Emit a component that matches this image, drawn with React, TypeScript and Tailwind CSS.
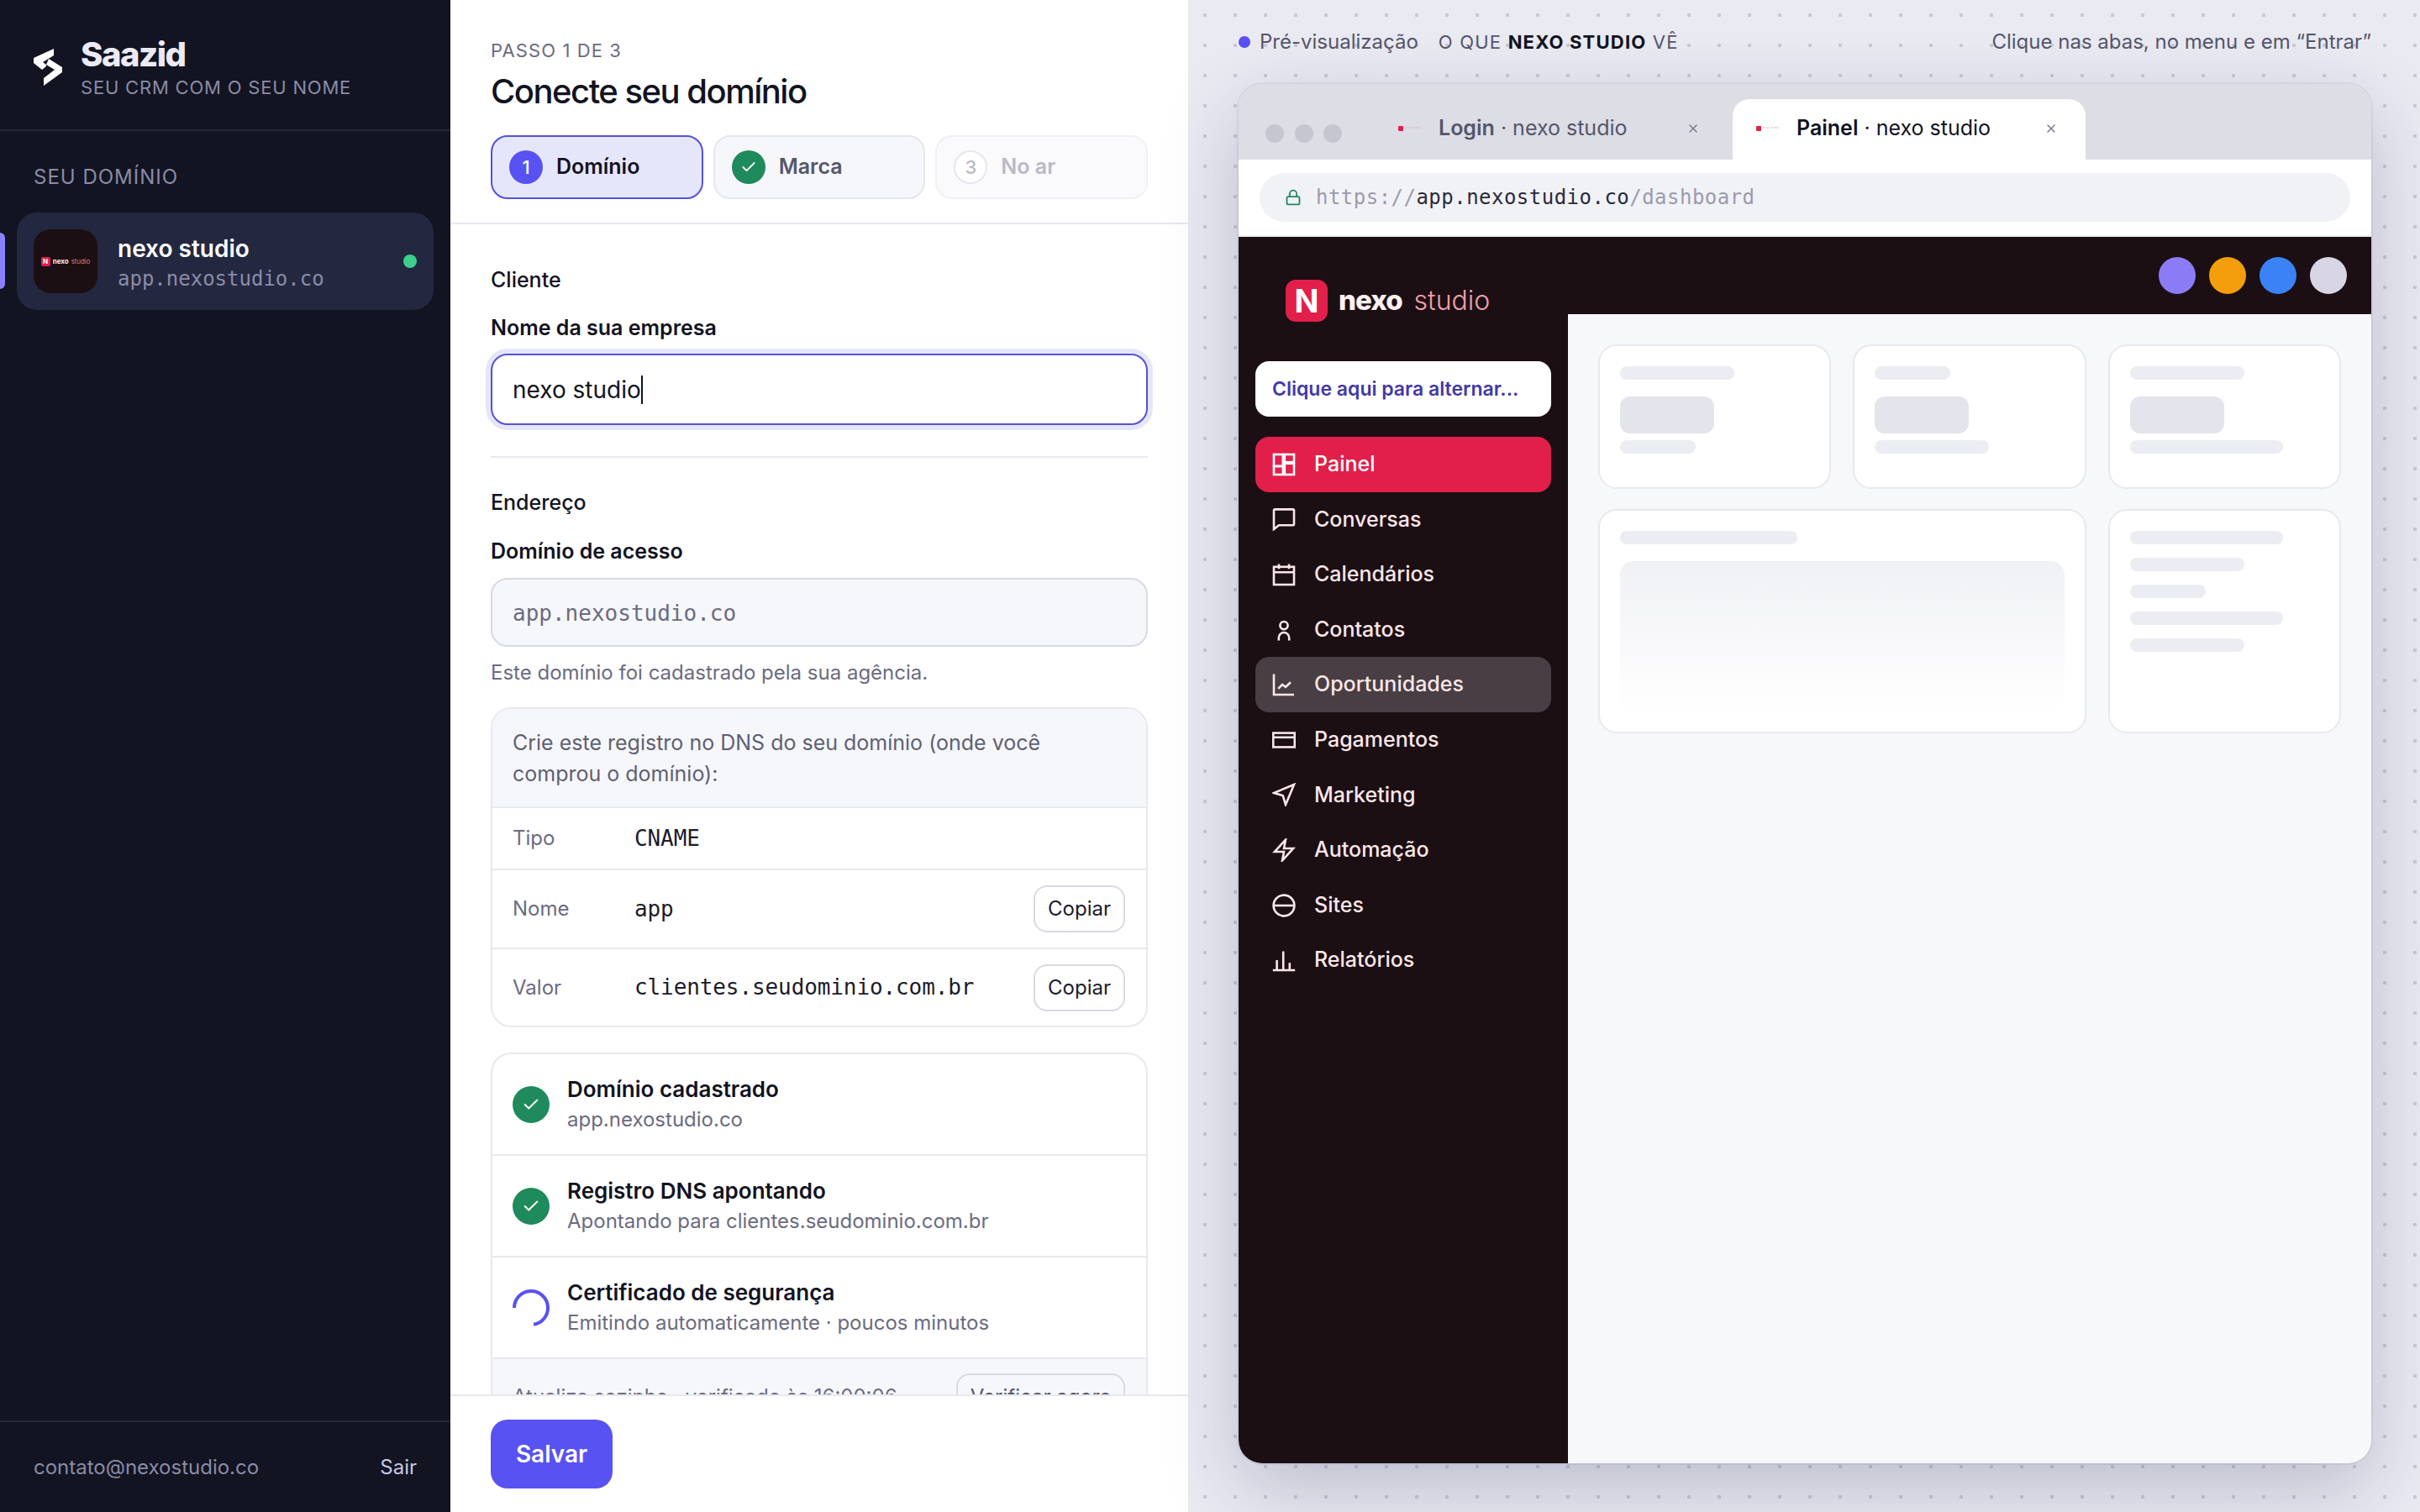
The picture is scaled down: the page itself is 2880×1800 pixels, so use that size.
import { Check, Lock, X } from "lucide-react";
import type { ReactNode } from "react";

const stroke = {
  fill: "none",
  stroke: "currentColor",
  strokeWidth: 1.3,
};

function NavIcon({ children }: { children: ReactNode }) {
  return (
    <svg width="28" height="28" viewBox="0 0 14 14" {...stroke} className="shrink-0">
      {children}
    </svg>
  );
}

const navItems: { label: string; icon: ReactNode; state?: "active" | "hover" }[] = [
  {
    label: "Painel",
    state: "active",
    icon: (
      <>
        <rect x="1" y="1" width="5.4" height="7" />
        <rect x="1" y="8" width="5.4" height="5" />
        <rect x="7.4" y="1" width="5.6" height="4.6" />
        <rect x="7.4" y="6.4" width="5.6" height="6.6" />
      </>
    ),
  },
  {
    label: "Conversas",
    icon: <path d="M1.6 1.2H12.4a.6.6 0 0 1 .6.6V10a.6.6 0 0 1-.6.6H4L1 13V1.8a.6.6 0 0 1 .6-.6Z" />,
  },
  {
    label: "Calendários",
    icon: (
      <>
        <rect x="1" y="2.4" width="12" height="10.6" />
        <path d="M1 5.6H13M4 .8V3.6M10 .8V3.6" />
      </>
    ),
  },
  {
    label: "Contatos",
    icon: (
      <>
        <circle cx="7" cy="4.3" r="2.3" />
        <path d="M3.9 13.2V11.6a3.1 3.1 0 0 1 6.2 0V13.2" />
      </>
    ),
  },
  {
    label: "Oportunidades",
    state: "hover",
    icon: <path d="M1 .8V13H13M3.6 9.4 6 7l2 1.4L11 5.6" />,
  },
  {
    label: "Pagamentos",
    icon: (
      <>
        <rect x=".6" y="2.8" width="12.8" height="8.4" />
        <path d="M.6 5.4H13.4" />
      </>
    ),
  },
  {
    label: "Marketing",
    icon: <path d="M13 1 1 6l5.4 1.6L8 13Z" />,
  },
  {
    label: "Automação",
    icon: <path d="M8 .8 1.4 8H7l-1 5.2L12.6 6H7Z" />,
  },
  {
    label: "Sites",
    icon: (
      <>
        <circle cx="7" cy="7" r="6.2" />
        <path d="M.8 7H13.2" />
      </>
    ),
  },
  {
    label: "Relatórios",
    icon: <path d="M.4 13H13.6M2.8 13V7M6.6 13V1.8M10.4 13V8.6" />,
  },
];

function SaazidMark() {
  return (
    <svg width="34" height="44" viewBox="10 8 34 44" className="shrink-0">
      <polygon fill="#ffffff" points="34,8 34,16 21,24 25,27 25,29 20,33 10,25 10,19" />
      <polygon fill="#ffffff" points="28,20 44,30 44,36 22,52 22,43 35,33 25,27" />
    </svg>
  );
}

function CheckBadge({ size }: { size: "sm" | "lg" }) {
  return (
    <span
      className={
        size === "sm"
          ? "flex h-10 w-10 shrink-0 items-center justify-center rounded-full bg-[#1f8a5b] text-white"
          : "flex h-11 w-11 shrink-0 items-center justify-center rounded-full bg-[#1f8a5b] text-white"
      }
    >
      <Check size={size === "sm" ? 20 : 22} strokeWidth={2.2} />
    </span>
  );
}

function StepTab({
  n,
  label,
  state,
}: {
  n: string;
  label: string;
  state: "current" | "done" | "todo";
}) {
  const box =
    state === "current"
      ? "border-[#5552d9] bg-[#e6e6fb] text-[#12131f]"
      : state === "done"
        ? "border-[#e6e7ee] bg-[#f6f7fb] text-[#55566a]"
        : "border-[#f0f0f5] bg-[#fafafc] text-[#b9b9c6]";
  return (
    <div className={`flex h-[76px] flex-1 items-center gap-4 rounded-[20px] border-2 pl-5 text-[25px] font-semibold ${box}`}>
      {state === "done" && <CheckBadge size="sm" />}
      {state === "current" && (
        <span className="flex h-10 w-10 shrink-0 items-center justify-center rounded-full bg-[#5852f2] text-[22px] font-medium text-white">
          {n}
        </span>
      )}
      {state === "todo" && (
        <span className="flex h-10 w-10 shrink-0 items-center justify-center rounded-full border-2 border-[#e6e7ee] bg-white text-[22px] font-medium text-[#b9b9c6]">
          {n}
        </span>
      )}
      {label}
    </div>
  );
}

function DnsRow({ label, value, copy, height }: { label: string; value: string; copy?: boolean; height: string }) {
  return (
    <div className={`flex items-center border-t-2 border-[#e8e8ef] px-6 ${height}`}>
      <span className="w-[145px] shrink-0 text-[24px] text-[#6b6b80]">{label}</span>
      <span className="flex-1 font-['DejaVu_Sans_Mono',monospace] text-[26px] tracking-[-0.1px] text-[#1b1c2b]">{value}</span>
      {copy && (
        <button className="mr-[1px] h-14 w-[109px] rounded-2xl border-2 border-[#d9d9e3] bg-white text-[24px] text-[#1b1c2b]">
          Copiar
        </button>
      )}
    </div>
  );
}

function StatusRow({ icon, title, sub }: { icon: ReactNode; title: string; sub: string }) {
  return (
    <div className="flex h-[121px] items-center gap-[21px] border-b-2 border-[#e8e8ef] pl-6">
      {icon}
      <div>
        <div className="text-[26px] leading-9 font-semibold text-[#12131f]">{title}</div>
        <div className="text-[24px] leading-9 text-[#6b6b80]">{sub}</div>
      </div>
    </div>
  );
}

function MiniLogo() {
  return (
    <div className="flex items-center">
      <span className="flex h-[11px] w-[11px] items-center justify-center rounded-[2px] bg-[#e21f4a] text-[8px] leading-none font-bold text-white">
        N
      </span>
      <span className="ml-[3px] text-[8px] leading-none font-bold text-[#fdecee]">nexo</span>
      <span className="ml-[3px] text-[8px] leading-none font-light text-[#f0a0aa]">studio</span>
    </div>
  );
}

function Favicon() {
  return (
    <div className="flex w-7 shrink-0 items-center">
      <span className="h-[6px] w-[6px] shrink-0 rounded-[1px] bg-[#e21f4a]" />
      <span className="ml-[2px] text-[3.5px] leading-none whitespace-nowrap text-[#e8b4be]">nexo studio</span>
    </div>
  );
}

function BrowserTab({ active, title }: { active?: boolean; title: string }) {
  return (
    <div
      className={
        active
          ? "flex h-[72px] w-[420px] items-center rounded-t-[20px] bg-white pr-[33px] pb-[2px] pl-7 text-[25px] text-[#12131f]"
          : "flex h-[72px] w-[420px] items-center rounded-t-[20px] pr-[33px] pb-[2px] pl-7 text-[25px] text-[#55566a]"
      }
    >
      <Favicon />
      <span className="ml-[20px] flex-1">
        <span className="font-semibold">{title}</span> · nexo studio
      </span>
      <X size={16} strokeWidth={2} className="text-[#77788a]" />
    </div>
  );
}

function Bar({ w }: { w: string }) {
  return <div className={`${w} h-4 rounded-lg bg-[#ecedf2]`} />;
}

function StatCard({ top, bottom }: { top: string; bottom: string }) {
  return (
    <div className="h-[172px] rounded-[22px] border-2 border-[#e8e8ef] bg-white p-6">
      <Bar w={top} />
      <div className="mt-5 h-11 w-[112px] rounded-xl bg-[#e4e4ec]" />
      <div className="mt-2">
        <Bar w={bottom} />
      </div>
    </div>
  );
}

export default function App() {
  return (
    <div className="flex h-[1800px] w-[2880px] overflow-hidden font-['Inter',sans-serif]">
      {/* sidebar */}
      <aside className="flex h-full w-[536px] shrink-0 flex-col bg-[#121421]">
        <div className="flex h-[156px] items-center gap-[22px] border-b-2 border-[#252638] pt-[6px] pl-10">
          <SaazidMark />
          <div>
            <div className="text-[40px] leading-[46px] font-extrabold tracking-[-1.5px] text-[#eceaf6]">Saazid</div>
            <div className="mt-[2px] text-[22px] leading-7 tracking-[0.8px] text-[#8b8ba7]">SEU CRM COM O SEU NOME</div>
          </div>
        </div>
        <div className="relative flex-1">
          <div className="pt-[39px] pl-10 text-[24px] leading-8 tracking-[1px] text-[#8b8ba7]">SEU DOMÍNIO</div>
          <div className="mx-5 mt-[26px] flex h-[116px] items-center gap-6 rounded-3xl bg-[#232840] px-5">
            <div className="flex h-[76px] w-[76px] shrink-0 items-center justify-center rounded-[20px] bg-[#1b0f14]">
              <MiniLogo />
            </div>
            <div className="flex-1 pt-[2px]">
              <div className="text-[28px] leading-10 font-semibold text-white">nexo studio</div>
              <div className="font-['DejaVu_Sans_Mono',monospace] text-[24px] leading-8 text-[#8b8ba7]">
                app.nexostudio.co
              </div>
            </div>
            <span className="h-4 w-4 rounded-full bg-[#3ecf8e]" />
          </div>
          <span className="absolute top-[121px] left-0 h-[67px] w-[6px] rounded-r-md bg-[#8b80ff]" />
        </div>
        <div className="flex h-[109px] items-center justify-between border-t-2 border-[#252638] px-10 text-[24px]">
          <span className="text-[#8b8ba7]">contato@nexostudio.co</span>
          <span className="text-[#c8c8e6]">Sair</span>
        </div>
      </aside>

      {/* form */}
      <main className="flex h-full w-[880px] shrink-0 flex-col border-r-2 border-[#e8e8ef] bg-white">
        <header className="h-[267px] shrink-0 border-b-2 border-[#e8e8ef] px-12 pt-[44px]">
          <div className="text-[22px] leading-8 tracking-[1.1px] text-[#6b6b80]">PASSO 1 DE 3</div>
          <h1 className="mt-[7px] text-[40px] leading-[52px] font-medium tracking-[-1.5px] text-[#12131f]">
            Conecte seu domínio
          </h1>
          <div className="mt-[26px] flex gap-3">
            <StepTab n="1" label="Domínio" state="current" />
            <StepTab n="2" label="Marca" state="done" />
            <StepTab n="3" label="No ar" state="todo" />
          </div>
        </header>

        <div className="min-h-0 flex-1 overflow-hidden px-12 pt-[50px]">
          <div className="text-[25px] leading-8 font-medium text-[#12131f]">Cliente</div>
          <div className="mt-[25px] text-[25px] leading-8 font-semibold text-[#12131f]">Nome da sua empresa</div>
          <div className="mt-[15px] flex h-[85px] items-center rounded-[20px] border-2 border-[#5552d9] bg-white pl-6 text-[28px] text-[#12131f] shadow-[0_0_0_6px_#e6e6fb]">
            nexo studio
            <span className="h-[34px] w-[2px] bg-[#12131f]" />
          </div>
          <div className="mt-[37px] h-[2px] bg-[#e8e8ef]" />

          <div className="mt-[37px] text-[25px] leading-8 font-medium text-[#12131f]">Endereço</div>
          <div className="mt-[26px] text-[25px] leading-8 font-semibold text-[#12131f]">Domínio de acesso</div>
          <div className="mt-4 flex h-[82px] items-center rounded-[20px] border-2 border-[#d9d9e3] bg-[#f6f7fb] pt-[2px] pl-6 font-['DejaVu_Sans_Mono',monospace] text-[26px] text-[#6b6b80]">
            app.nexostudio.co
          </div>
          <div className="mt-[15px] text-[24px] leading-8 text-[#6b6b80]">Este domínio foi cadastrado pela sua agência.</div>

          <div className="mt-[25px] overflow-hidden rounded-3xl border-2 border-[#e8e8ef]">
            <div className="h-[116px] bg-[#f6f7fb] px-6 pt-[22px] text-[25px] leading-[37px] text-[#5f5f73]">
              Crie este registro no DNS do seu domínio (onde você comprou o domínio):
            </div>
            <DnsRow label="Tipo" value="CNAME" height="h-[74px]" />
            <DnsRow label="Nome" value="app" copy height="h-[94px]" />
            <DnsRow label="Valor" value="clientes.seudominio.com.br" copy height="h-[93px]" />
          </div>

          <div className="mt-[30px] overflow-hidden rounded-3xl border-2 border-[#e8e8ef]">
            <StatusRow icon={<CheckBadge size="lg" />} title="Domínio cadastrado" sub="app.nexostudio.co" />
            <StatusRow
              icon={<CheckBadge size="lg" />}
              title="Registro DNS apontando"
              sub="Apontando para clientes.seudominio.com.br"
            />
            <StatusRow
              icon={
                <svg width="44" height="44" viewBox="0 0 44 44" fill="none" stroke="#5852f2" strokeWidth="4" className="shrink-0">
                  <path d="M2 22A20 20 0 1 1 25 41.8" />
                </svg>
              }
              title="Certificado de segurança"
              sub="Emitindo automaticamente · poucos minutos"
            />
            <div className="flex h-[90px] items-center justify-between bg-[#f6f7fb] px-6 text-[24px] text-[#6b6b80]">
              <span>Atualiza sozinho · verificado às 16:00:06</span>
              <button className="mr-[1px] h-14 w-[201px] rounded-2xl border-2 border-[#d9d9e3] text-[24px] text-[#55566a]">
                Verificar agora
              </button>
            </div>
          </div>
        </div>

        <footer className="h-[140px] shrink-0 border-t-2 border-[#e8e8ef] bg-white px-12 pt-[28px]">
          <button className="h-[82px] w-[145px] rounded-[20px] bg-[#5852f2] text-[28px] font-semibold text-white">
            Salvar
          </button>
        </footer>
      </main>

      {/* preview */}
      <section className="flex h-full flex-1 flex-col bg-[#e9eaf2] bg-[radial-gradient(circle,#c8c9d6_2px,transparent_2.5px)] bg-[length:36px_36px] px-[58px]">
        <div className="flex h-[100px] shrink-0 items-center text-[#55566a]">
          <span className="h-[14px] w-[14px] rounded-full bg-[#5852f2]" />
          <span className="ml-[11px] text-[24px]">Pré-visualização</span>
          <span className="ml-6 text-[22px] tracking-[1.2px]">
            O QUE <b className="font-bold text-[#12131f]">NEXO STUDIO</b> VÊ
          </span>
          <span className="ml-auto text-[24px]">Clique nas abas, no menu e em “Entrar”</span>
        </div>

        <div className="flex h-[1642px] w-[1348px] flex-col overflow-hidden rounded-[28px] shadow-[0_0_0_2px_rgba(30,30,60,0.06),0_30px_90px_rgba(30,30,70,0.22)]">
          <div className="flex h-[90px] shrink-0 items-end bg-[#dcdde5] pl-8">
            <div className="mb-5 flex gap-[12.5px]">
              <span className="h-[22px] w-[22px] rounded-full bg-[#c5c6d0]" />
              <span className="h-[22px] w-[22px] rounded-full bg-[#c5c6d0]" />
              <span className="h-[22px] w-[22px] rounded-full bg-[#c5c6d0]" />
            </div>
            <div className="ml-[39px] flex gap-[6px]">
              <BrowserTab title="Login" />
              <BrowserTab title="Painel" active />
            </div>
          </div>

          <div className="flex h-[92px] shrink-0 items-start border-b-2 border-[#eeeef3] bg-white px-[25px] pt-4">
            <div className="flex h-[58px] w-full items-center rounded-full bg-[#f1f2f6] pl-[30px] font-['DejaVu_Sans_Mono',monospace] text-[24px] tracking-[0.48px] text-[#9a9aae]">
              <Lock size={20} strokeWidth={2.2} className="shrink-0 text-[#1f8a5b]" />
              <span className="ml-[17px]">
                https://<span className="text-[#2a2a3a]">app.nexostudio.co</span>/dashboard
              </span>
            </div>
          </div>

          <div className="flex min-h-0 flex-1">
            <div className="flex w-[392px] shrink-0 flex-col bg-[#1b0f14] px-5 pt-[51px]">
              <div className="flex h-[50px] items-center pl-9">
                <span className="flex h-[50px] w-[50px] items-center justify-center rounded-xl bg-[#e21f4a] text-[38px] font-bold text-white">
                  N
                </span>
                <span className="ml-[13px] text-[33px] font-extrabold tracking-[-1px] text-[#fdf0f1]">nexo</span>
                <span className="ml-[14px] text-[32px] font-light text-[#f0a0aa]">studio</span>
              </div>
              <div className="mt-[47px] flex h-[66px] items-center rounded-2xl bg-white pl-5 text-[23px] font-semibold text-[#4338a8]">
                Clique aqui para alternar...
              </div>
              <nav className="mt-6 flex flex-col">
                {navItems.map((item) => (
                  <div
                    key={item.label}
                    className={
                      item.state === "active"
                        ? "flex h-[65.6px] items-center rounded-2xl bg-[#e21f4a] pl-5 text-[25px] font-medium text-white"
                        : item.state === "hover"
                          ? "flex h-[65.6px] items-center rounded-2xl bg-[#483e43] pl-5 text-[25px] font-medium text-[#fbe6e8]"
                          : "flex h-[65.6px] items-center rounded-2xl pl-5 text-[25px] font-medium text-[#fbe6e8]"
                    }
                  >
                    <NavIcon>{item.icon}</NavIcon>
                    <span className="ml-[22px]">{item.label}</span>
                  </div>
                ))}
              </nav>
            </div>

            <div className="flex min-w-0 flex-1 flex-col">
              <div className="flex h-[92px] shrink-0 items-start justify-end gap-4 bg-[#1b0f14] pt-6 pr-[29px]">
                <span className="h-11 w-11 rounded-full bg-[#8b7cf6]" />
                <span className="h-11 w-11 rounded-full bg-[#f59e0b]" />
                <span className="h-11 w-11 rounded-full bg-[#3b82f6]" />
                <span className="h-11 w-11 rounded-full bg-[#d8d6e4]" />
              </div>
              <div className="grid flex-1 grid-cols-3 content-start gap-x-[26px] gap-y-6 bg-[#f7f8fa] px-9 pt-9">
                <StatCard top="w-[136px]" bottom="w-[90px]" />
                <StatCard top="w-[90px]" bottom="w-[136px]" />
                <StatCard top="w-[136px]" bottom="w-[182px]" />
                <div className="col-span-2 h-[267px] rounded-[22px] border-2 border-[#e8e8ef] bg-white p-6">
                  <Bar w="w-[211px]" />
                  <div className="mt-5 h-[179px] rounded-2xl bg-gradient-to-b from-[#f0f1f5] to-transparent" />
                </div>
                <div className="flex h-[267px] flex-col gap-4 rounded-[22px] border-2 border-[#e8e8ef] bg-white p-6">
                  <Bar w="w-[182px]" />
                  <Bar w="w-[136px]" />
                  <Bar w="w-[90px]" />
                  <Bar w="w-[182px]" />
                  <Bar w="w-[136px]" />
                </div>
              </div>
            </div>
          </div>
        </div>
      </section>
    </div>
  );
}
